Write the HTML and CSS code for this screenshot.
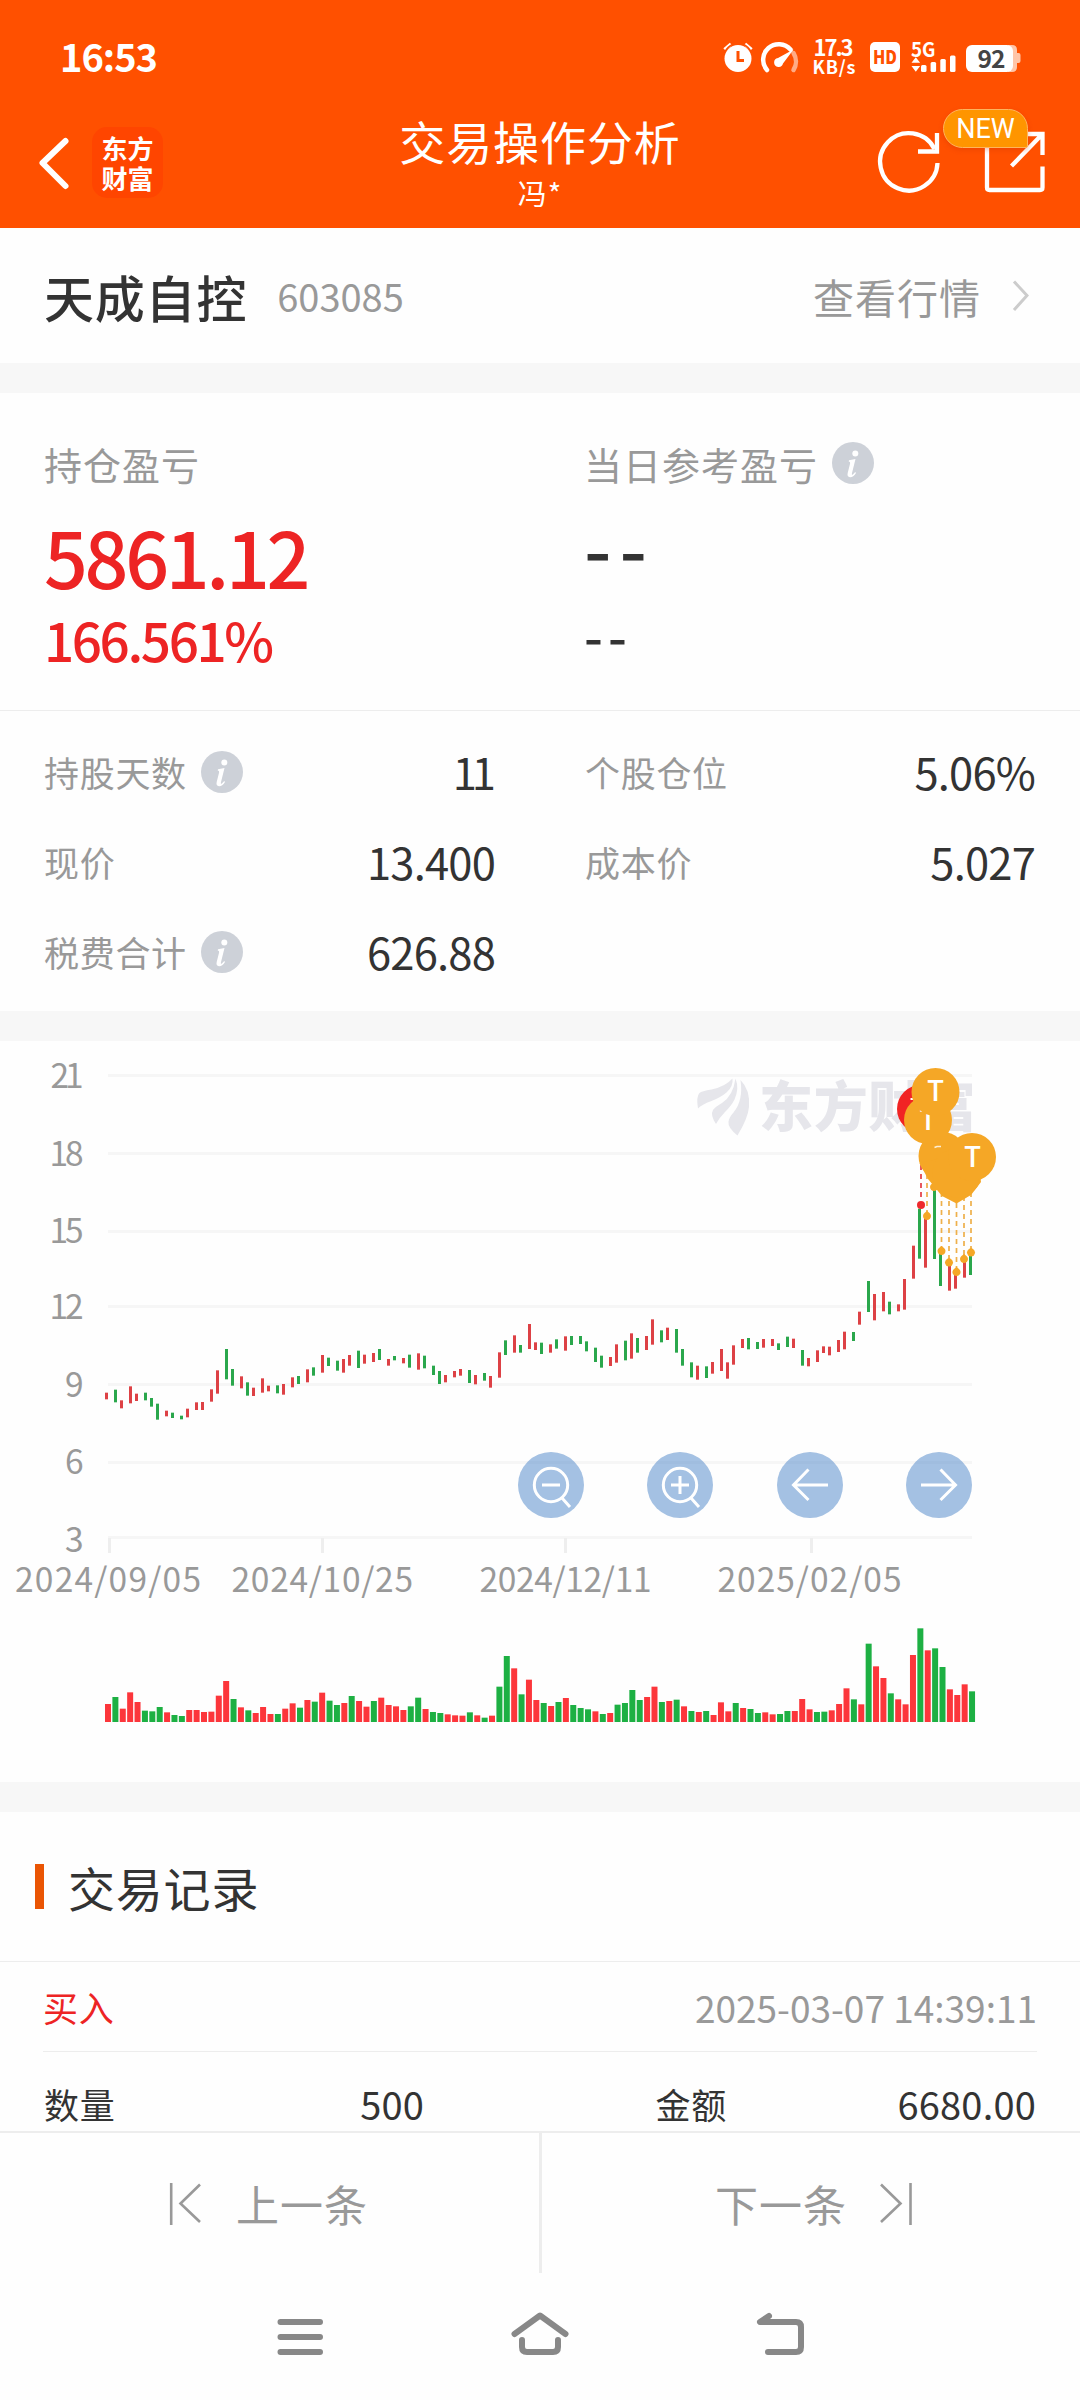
FILE: index.html
```html
<!DOCTYPE html>
<html lang="zh-CN">
<head>
<meta charset="utf-8">
<title>交易操作分析</title>
<link rel="stylesheet" href="styles.css">
</head>
<body>
<svg class="defs" width="0" height="0" aria-hidden="true">
  <symbol id="info" viewBox="0 0 42 42">
    <circle cx="21" cy="21" r="21" fill="#cdd1d8"/>
    <circle cx="23.3" cy="11.5" r="3" fill="#fff"/>
    <path d="M17 18.2l6.5-1.2-3.6 14.5q-.3 1.8 1 .9l2.300-2.300.8.8q-3 4.600-6 4.300-3.200-.3-2.300-4.200l2.400-9.500q.4-1.800-1.400-1.900z" fill="#fff"/>
  </symbol>
</svg>

<header class="top">
  <div class="status">
    <span class="clock">16:53</span>
    <svg class="status-icons" width="305" height="60" viewBox="720 28 305 60">
      <g fill="#fff">
        <circle cx="738" cy="58.500" r="13.500"/>
        <path d="M724.500 49.500l6.500-5.500M751.500 49.500l-6.500-5.500" stroke="#fff" stroke-width="3.500"/>
        <path d="M724.500 52.500q3-6 9-8.500M751.500 52.500q-3-6-9-8.500" fill="none" stroke="#ff5000" stroke-width="1.500"/>
        <path d="M738 51v9.500h6" fill="none" stroke="#ff5000" stroke-width="3"/>
        <path d="M767 70a15.500 15.500 0 0 1 23.500-20.500" fill="none" stroke="#fff" stroke-width="4.500" stroke-linecap="round"/>
        <path d="M793.500 53a16 16 0 0 1 0 17" fill="none" stroke="#ffab85" stroke-width="4.500" stroke-linecap="round"/>
        <path d="M793.500 49.500l-10.500 14a4.500 4.500 0 1 1-5-5.500z"/>
        <text class="st" x="813.500" y="55.500" font-size="22" textLength="40">17.3</text>
        <text class="st" x="812.500" y="74" font-size="18" textLength="43">KB/s</text>
        <rect x="870" y="42" width="30" height="30" rx="5"/>
        <text class="st hd" x="873" y="63.800" font-size="18.500" fill="#ff5000" textLength="24" lengthAdjust="spacingAndGlyphs">HD</text>
        <text class="st" x="911" y="56.500" font-size="20" textLength="24.500" lengthAdjust="spacingAndGlyphs">5G</text>
        <path d="M911.500 62.800l4.300-5.500 4.300 5.500zM911.500 66l4.300 5.800 4.300-5.800z"/>
        <rect x="921" y="65" width="5.500" height="7" rx="1.500"/>
        <rect x="930.600" y="62" width="5.500" height="10" rx="1.500"/>
        <rect x="940.300" y="59" width="5.500" height="13" rx="1.500"/>
        <rect x="950" y="55.500" width="5.500" height="16.500" rx="1.500"/>
        <path d="M1008 45h4q5 0 5 5v3h1.500q2 0 2 2v6q0 2-2 2H1017v4q0 5-5 5h-4z" fill="#ffc5a8"/>
        <rect x="966" y="45" width="47" height="27" rx="6"/>
        <text class="st" x="977.500" y="67.500" font-size="24.500" fill="#444" textLength="28">92</text>
      </g>
    </svg>
  </div>
  <div class="titlebar">
    <div class="left">
      <svg width="36" height="60" viewBox="36 133 36 60"><path d="M65.500 141L42.500 163 65.500 186" fill="none" stroke="#fff" stroke-width="6" stroke-linecap="round" stroke-linejoin="round"/></svg>
      <div class="brand"><span>东方</span><span>财富</span></div>
    </div>
    <div class="title"><h1>交易操作分析</h1><p>冯*</p></div>
    <div class="right">
      <svg width="180" height="70" viewBox="870 128 180 70">
        <g fill="none" stroke="#fff" stroke-width="4.300">
          <path d="M937.500 163A28.700 28.700 0 1 1 934.500 149"/>
          <path d="M937 133v18.500h-19"/>
          <path d="M987 134v53.500q0 2.500 2.500 2.500h50.500q2.500 0 2.500-2.500V166.500M1023 134h19.500v21M1042 134.500L1011.500 166"/>
        </g>
      </svg>
      <span class="new">NEW</span>
    </div>
  </div>
</header>

<main>
  <section class="stock">
    <h2>天成自控</h2><span class="code">603085</span>
    <span class="quote">查看行情</span>
    <svg width="17" height="34" viewBox="1011 279 17 34"><path d="M1013 281.500l13 14-13 14.500" fill="none" stroke="#ccc" stroke-width="3"/></svg>
  </section>

  <section class="profit">
    <div><p class="lab">持仓盈亏</p><p class="big red">5861.12</p><p class="pct red">166.561%</p></div>
    <div><p class="lab">当日参考盈亏<svg class="i" width="42" height="42"><use href="#info"/></svg></p><p class="big dash">--</p><p class="pct dash">--</p></div>
  </section>

  <section class="facts">
    <div class="fact"><span>持股天数</span><svg class="i" width="42" height="42"><use href="#info"/></svg><b class="ones">11</b></div>
    <div class="fact"><span>个股仓位</span><b>5.06%</b></div>
    <div class="fact"><span>现价</span><b>13.400</b></div>
    <div class="fact"><span>成本价</span><b>5.027</b></div>
    <div class="fact"><span>税费合计</span><svg class="i" width="42" height="42"><use href="#info"/></svg><b>626.88</b></div>
  </section>

  <section class="chart">
    <svg width="1080" height="741" viewBox="0 1041 1080 741">
      <g id="grid"></g>
      <g class="axis">
        <text x="83.500" y="1088" text-anchor="end" textLength="33">21</text>
        <text x="83.500" y="1165.500" text-anchor="end" textLength="34">18</text>
        <text x="83.500" y="1242.500" text-anchor="end" textLength="34">15</text>
        <text x="83.500" y="1319" text-anchor="end" textLength="34">12</text>
        <text x="83.500" y="1396.500" text-anchor="end">9</text>
        <text x="83.500" y="1474" text-anchor="end">6</text>
        <text x="83.500" y="1551.500" text-anchor="end">3</text>
        <text x="15" y="1591.500" textLength="186">2024/09/05</text>
        <text x="231.500" y="1591.500" textLength="181.500">2024/10/25</text>
        <text x="479.500" y="1591.500" textLength="172">2024/12/11</text>
        <text x="717.500" y="1591.500" textLength="184">2025/02/05</text>
      </g>
      <clipPath id="plot"><rect x="690" y="1070" width="282" height="80"/></clipPath>
      <g fill="#e6e6eb" clip-path="url(#plot)">
        <path d="M698 1108.500q-2-12 1.500-15.500 2-2 12-3.500 14-3 21-11 1 8-6 14-6 5-15 8.500-10 3.500-13.500 7.500z"/>
        <path d="M716 1124q-6-9-3-14 2-3 9-7 11-7 13.500-24.500 4 10-1 21-3 6-9.500 12.500-6 6-9 12z"/>
        <path d="M737.500 1135.500q-10-8-9-14 .5-4 5-9 10-12 7-32.500 10 10 8.500 27-1 11-11.500 28.500z"/>
        <text class="mark" x="759" y="1126.500" textLength="218">东方财富</text>
      </g>
      <g id="candles"></g>
      <g id="volume"></g>
      <g fill="none" stroke-width="1.700" stroke-dasharray="5 4">
        <path d="M921 1165v36" stroke="#e33b43"/>
        <path d="M927 1174v40M941.500 1192v56M949 1192v66M956.500 1203v66M964 1196v59M971 1192v56" stroke="#eeb04a"/>
      </g>
      <circle cx="921" cy="1205" r="4" fill="#ee2a2e"/>
      <g id="drops" fill="#f5a726"></g>
      <circle cx="921" cy="1109" r="24" fill="#f12424"/>
      <path d="M910.500 1099h4" stroke="#fff" stroke-width="2"/>
      <g fill="#f5a726">
        <circle cx="942.500" cy="1156" r="24"/>
        <path d="M919.500 1163L928 1179 942 1196 956.500 1203.500 971 1195 981 1182 975 1150z"/>
        <circle cx="957" cy="1173" r="24.500"/>
        <circle cx="928" cy="1120" r="24"/>
      </g>
      <text class="pin" x="928" y="1130" text-anchor="middle">T</text>
      <circle cx="935.500" cy="1092" r="24" fill="#f5a726"/>
      <text class="pin" x="935.500" y="1101" text-anchor="middle">T</text>
      <circle cx="972" cy="1157" r="24" fill="#f5a726"/>
      <text class="pin" x="972.500" y="1166.500" text-anchor="middle">T</text>
      <path d="M934.500 1147.500l2.500-1h4" stroke="#fff" stroke-width="1.500" fill="none" opacity=".8"/>
      <g fill="rgba(73,131,199,.5)">
        <circle cx="551" cy="1485" r="33"/><circle cx="680" cy="1485" r="33"/><circle cx="810" cy="1485" r="33"/><circle cx="939" cy="1485" r="33"/>
      </g>
      <g fill="none" stroke="#fff" stroke-width="3">
        <circle cx="551" cy="1485" r="16.700"/><path d="M542 1485h18M562 1498l8 9"/>
        <circle cx="680" cy="1485" r="16.700"/><path d="M671 1485h18M680 1476v18M691 1498l8 9"/>
        <path d="M828 1485h-34M808.500 1469.500L793.500 1485l15 15M921 1485h34M940.500 1469.500L955.500 1485l-15 15"/>
      </g>
    </svg>
  </section>

  <section class="records">
    <h3>交易记录</h3>
    <div class="rec"><span class="red">买入</span><time>2025-03-07 14:39:11</time></div>
    <div class="qty"><span>数量</span><b>500</b><span class="amount">金额</span><b>6680.00</b></div>
  </section>
</main>

<footer>
  <div class="pager">
    <div class="prev"><svg width="34" height="44" viewBox="170 2180 34 44"><path d="M172.200 2182v42M201 2183.500l-19.500 19 19.500 18.500" fill="none" stroke="#999" stroke-width="2.600"/></svg><span>上一条</span></div>
    <div class="next"><span>下一条</span><svg width="34" height="44" viewBox="878 2180 34 44"><path d="M909.500 2182v42M880 2183.500l19.500 19-19.500 18.500" fill="none" stroke="#999" stroke-width="2.600"/></svg></div>
  </div>
  <svg class="nav" width="1080" height="127" viewBox="0 2273 1080 127">
    <g fill="none" stroke="#888" stroke-width="6" stroke-linecap="round" stroke-linejoin="round">
      <path d="M280.500 2322h39.500M280.500 2337h39.500M280.500 2352h39.500"/>
      <path d="M514.500 2334L540 2315.500 565.500 2334M522 2340v7q0 5 5 5h26q5 0 5-5v-7"/>
      <path d="M769 2316l-9 6h36q5 0 5 5v20q0 5-5 5h-28"/>
    </g>
  </svg>
</footer>
<script src="chart.js"></script>
</body>
</html>
```
FILE: styles.css
```css
* { box-sizing: border-box; margin: 0; padding: 0; }
body {
  width: 1080px; height: 2400px; overflow: hidden;
  display: flex; flex-direction: column;
  background: #fefefe; color: #333;
  font-family: "Noto Sans CJK SC", sans-serif;
}
b, h1, h2, h3 { font-weight: 400; }
svg { display: block; flex: none; }
.defs { position: absolute; }
.red { color: #ed2424; }

.top { height: 228px; background: #ff5000; color: #fff; flex: none; }
.status { height: 100px; padding: 28px 55px 0 60px; display: flex; justify-content: space-between; }
.clock { font-size: 38px; line-height: 55px; font-weight: 700; letter-spacing: -1px; }
.st { font-weight: 700; font-family: "Noto Sans CJK SC", sans-serif; }
.hd { font-weight: 900; }
.titlebar { height: 128px; display: grid; grid-template-columns: 300px 480px 300px; }
.left { display: flex; align-items: center; padding: 0 0 3px 36px; }
.brand {
  width: 71px; height: 71px; margin-left: 20px; border-radius: 15px; background: #ff4500;
  display: flex; flex-direction: column; align-items: center; justify-content: center;
  font-size: 26px; line-height: 30px; font-weight: 700;
}
.title { text-align: center; padding-top: 14px; }
.title h1 { font-size: 46px; line-height: 52px; letter-spacing: .9px; }
.title p { font-size: 29px; line-height: 40px; margin-top: 6px; letter-spacing: 1px; }
.right { position: relative; padding: 28px 0 0 90px; }
.new {
  position: absolute; left: 163px; top: 9px; width: 85px; height: 39px;
  border: 1.5px solid #ffb45c; border-radius: 20px 20px 2px 20px; background: #ff9500;
  box-shadow: 0 2px 5px rgba(200, 50, 0, .3);
  font: 400 27px/38px Roboto, sans-serif; text-align: center;
}

.stock {
  height: 165px; border-bottom: 30px solid #f7f7f7; padding: 0 51px 0 44px;
  display: flex; align-items: center;
}
.stock h2 { font-size: 50px; line-height: 60px; font-weight: 500; letter-spacing: .8px; }
.stock .code { font-size: 38px; line-height: 50px; color: #999; margin-left: 30px; }
.quote { font-size: 41px; line-height: 50px; letter-spacing: 1px; color: #999; margin-left: auto; margin-right: 31px; }

.profit { height: 318px; padding: 46px 0 0 44px; border-bottom: 1.500px solid #ededed; display: grid; grid-template-columns: 540px 1fr; }
.lab { display: flex; align-items: center; font-size: 38px; line-height: 50px; height: 50px; letter-spacing: 1px; color: #999; }
.lab .i { margin: -3px 0 0 14px; }
.big { font-size: 77px; line-height: 90px; height: 90px; margin-top: 22px; font-weight: 500; letter-spacing: -3.300px; }
.pct { font-size: 53px; line-height: 60px; height: 60px; margin-top: 8px; font-weight: 500; letter-spacing: -2.400px; }
.dash { position: relative; }
.big.dash { letter-spacing: 8px; top: -10px; }
.pct.dash { letter-spacing: 5px; top: -5px; }

.facts { height: 330px; padding: 16px 44px 0; border-bottom: 30px solid #f7f7f7; display: grid; grid-template-columns: 451px 450px; column-gap: 90px; grid-auto-rows: 90.200px; }
.fact { display: flex; align-items: center; font-size: 35px; letter-spacing: .7px; color: #999; }
.fact .i { margin: -1px 0 0 14px; }
.fact b { margin-left: auto; font-size: 43.500px; line-height: 56px; color: #333; letter-spacing: -.8px; padding-bottom: 1px; }
.fact .ones { letter-spacing: -5px; margin-right: 4px; }
.fact span { line-height: 50px; }

.chart { height: 771px; border-bottom: 30px solid #f7f7f7; }
.axis { font-size: 33.500px; fill: #999; }
.mark { font-size: 54px; font-weight: 900; }
.pin { font-size: 28px; fill: #fff; font-weight: 500; }

.records { height: 319px; overflow: hidden; }
.records h3 { height: 150px; border-bottom: 1.500px solid #ededed; padding: 0 35px; display: flex; align-items: center; font-size: 47px; letter-spacing: .8px; }
.records h3::before { content: ""; width: 9px; height: 45px; margin-right: 24px; background: #ea5504; }
.rec { height: 90px; margin: 0 43px; border-bottom: 1.500px solid #ededed; display: flex; align-items: center; justify-content: space-between; font-size: 35px; letter-spacing: .7px; }
.rec time { font-size: 37px; letter-spacing: 0; color: #999; }
.qty { height: 78px; margin: 0 44px; padding-top: 27px; line-height: 50px; display: grid; grid-template-columns: 200px 180px 303px 1fr; align-items: start; justify-items: start; font-size: 35px; letter-spacing: .7px; }
.qty b { font-size: 38px; letter-spacing: .2px; justify-self: end; }
.qty .amount { justify-self: end; }

footer { height: 269px; background: #fefefe; }
.pager { height: 142px; border-top: 2px solid #ededed; display: grid; grid-template-columns: 542px 538px; color: #999; font-size: 43px; letter-spacing: 1px; line-height: 56px; }
.pager > div { display: flex; align-items: center; padding-bottom: 1px; }
.prev { padding-left: 169px; gap: 33px; border-right: 3px solid #ededed; }
.next { padding-left: 173px; gap: 32px; }
```
FILE: chart.js
```js
const NS = "http://www.w3.org/2000/svg";
const START = 105, STEP = 7.385;
const RED = "#dd4145", GREEN = "#2aa74c";

function rect(parent, x, y, w, h, fill) {
  const r = document.createElementNS(NS, "rect");
  Object.entries({ x, y, width: w, height: h, fill }).forEach(([k, v]) => r.setAttribute(k, v));
  parent.appendChild(r);
}

const grid = document.getElementById("grid");
[1074, 1152, 1230, 1305, 1383, 1461, 1536].forEach(y => rect(grid, 108, y, 864, 3, "#f6f6f6"));
[108, 321, 564, 810].forEach(x => rect(grid, x, 1538, 3, 15, "#eeeeee"));

// high and low of each day, in thirds of a pixel below y = 1220
const days = `518-538r 509-547g 541-565r 499-550r 521-543r 518-541g 534-560g 551-599g 572-589r 578-594g
587-598g 566-592r 547-570r 546-570r 508-545r 451-521r 387-478g 447-497g 469-505r 487-527g
503-528r 475-518r 497-514r 496-520g 492-524r 472-502r 468-492g 448-487r 442-467g 405-458r
413-438g 422-452g 417-458r 405-437r 392-444g 404-431r 399-426r 387-420g 417-437r 408-421g
414-430r 404-443g 400-449r 407-445g 437-465g 453-492g 465-487r 453-472r 447-467r 450-489g
465-493r 459-482g 468-503r 397-473r 361-405g 346-398r 375-398g 312-387r 367-390r 368-402g
373-398r 358-386g 349-392r 348-375g 348-372g 364-394g 383-426g 407-443g 411-438r 373-428r
362-421g 340-416r 354-398g 348-390r 298-374r 331-367g 323-360r 327-398g 387-437g 427-472g
437-479r 439-474g 426-461r 387-453r 427-476r 376-434r 357-384r 354-388g 366-387g 357-383r
357-378r 370-390g 350-381g 356-384r 390-437g 414-439r 391-426r 379-399r 380-406r 360-396r
335-388r 336-363g 275-314r 183-276g 222-301r 216-274r 245-283g 253-274r 177-269r 77-176r
-34-116g -10-143r -90-117g 100-198g 132-212r 160-206r 120-173r 105-165g`.split(/\s+/);
const candles = document.getElementById("candles");
days.forEach((d, i) => {
  const [, hi, lo, c] = d.match(/^(-?\d+)-(\d+)([rg])$/);
  rect(candles, Math.round((START + 0.7 + i * STEP) / 3) * 3, 1220 + hi / 3, 3, (lo - hi) / 3, c === "r" ? RED : GREEN);
});

// top edge of each volume bar, in thirds of a pixel below y = 1480
const vols = `672r 651g 686r 637r 666r 692g 694g 681g 697r 705g 708g 690r 690r 696r 695r 647r 603r 657g 682r 691g
699r 681r 702r 702g 686r 670r 683g 660r 665g 638r 662g 675g 669r 648g 663r 680r 663g 653r 675r 679r
690r 679g 653g 687r 696g 699g 703r 706r 707r 697g 706r 713g 707r 620g 528g 565r 643g 599r 660r 669g
678r 666g 654r 675g 684g 688g 694r 702g 699r 674g 669g 630g 660g 651r 620r 666g 663r 659g 679r 693g
696r 693g 705r 667r 694r 669g 684r 687g 699g 697r 703r 702g 693g 693r 657r 688r 696g 695g 691r 672r
625r 658g 673r 491g 559r 594r 640g 658r 673r 525r 445g 511r 505g 561g 628r 645r 613r 634g`.split(/\s+/);
const volume = document.getElementById("volume");
vols.forEach((v, i) => {
  const top = 1480 + parseInt(v, 10) / 3;
  rect(volume, START + i * STEP, top, 6, 1722 - top, v.endsWith("r") ? "#fc363b" : "#1db043");
});

const drops = document.getElementById("drops");
[[927, 1216], [934, 1187], [941.5, 1251], [949, 1262.5], [956.5, 1272], [964, 1259], [971, 1252.500]].forEach(([x, y]) => {
  const p = document.createElementNS(NS, "path");
  p.setAttribute("d", `M${x} ${y - 5}l2.500 2a4 4 0 1 1-5 0z`);
  drops.appendChild(p);
});
```
